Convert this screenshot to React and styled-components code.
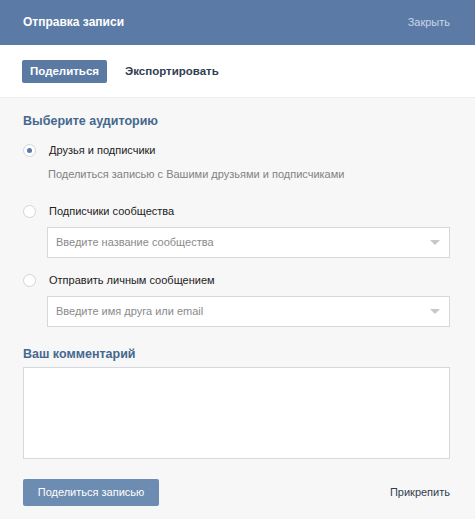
import React from "react";
import styled, { createGlobalStyle } from "styled-components";

const Global = createGlobalStyle`
  html, body { margin: 0; padding: 0; background: #f7f7f7; }
  body { font-family: "Liberation Sans", Arial, sans-serif; font-size: 11px; line-height: 13px; color: #000; }
  * { box-sizing: border-box; }
`;

const Box = styled.div`
  width: 475px;
  height: 519px;
  display: flex;
  flex-direction: column;
  background: #f7f7f7;
  overflow: hidden;
`;

const Header = styled.div`
  height: 45px;
  background: #5b7ba6;
  display: flex;
  align-items: center;
  justify-content: space-between;
  padding: 0 25px 0 23px;
`;

const Title = styled.div`
  color: #fff;
  font-weight: bold;
  font-size: 12px;
`;

const Close = styled.div`
  color: #c9d6e6;
  font-size: 11px;
`;

const Tabs = styled.div`
  height: 53px;
  background: #fff;
  border-bottom: 1px solid #ececec;
  display: flex;
  align-items: center;
  gap: 10px;
  padding: 0 0 0 22px;
`;

const Tab = styled.div`
  height: 23px;
  padding: 0 8px;
  display: flex;
  align-items: center;
  border-radius: 2px;
  font-weight: bold;
  font-size: 11.5px;
  color: ${(p) => (p.$active ? "#fff" : "#2f4052")};
  background: ${(p) => (p.$active ? "#5b7aa3" : "transparent")};
`;

const Body = styled.div`
  flex: 1;
  display: flex;
  flex-direction: column;
  padding: 15px 25px 0 23px;
`;

const Heading = styled.div`
  font-weight: bold;
  font-size: 12.5px;
  line-height: 16px;
  color: #45688e;
  margin-top: ${(p) => p.$mt || 0}px;
`;

const Option = styled.div`
  display: flex;
  align-items: center;
  gap: 13px;
  height: 16px;
  color: #222;
  margin-top: ${(p) => p.$mt}px;
`;

const Radio = styled.span`
  width: 13px;
  height: 13px;
  border-radius: 50%;
  border: 1px solid #d0d5dc;
  background: #fff;
  display: flex;
  align-items: center;
  justify-content: center;
  &::after {
    content: "";
    width: 5px;
    height: 5px;
    border-radius: 50%;
    background: ${(p) => (p.$on ? "#5b7aa3" : "transparent")};
  }
`;

const Hint = styled.div`
  color: #828282;
  margin: 10px 0 0 25px;
`;

const Select = styled.div`
  margin: 8px 0 0 24px;
  height: 31px;
  background: #fff;
  border: 1px solid #d3d9de;
  display: flex;
  align-items: center;
  justify-content: space-between;
  padding: 0 9px 0 8px;
  color: #8a8a8a;
`;

const Arrow = styled.span`
  width: 0;
  height: 0;
  border-left: 5px solid transparent;
  border-right: 5px solid transparent;
  border-top: 5px solid #c4c9cf;
`;

const Comment = styled.div`
  margin-top: 5px;
  height: 92px;
  background: #fff;
  border: 1px solid #d3d9de;
`;

const Footer = styled.div`
  margin-top: 20px;
  display: flex;
  align-items: center;
  justify-content: space-between;
`;

const Button = styled.div`
  width: 136px;
  height: 27px;
  border-radius: 2px;
  background: #6d8cb1;
  color: #fff;
  display: flex;
  align-items: center;
  justify-content: center;
`;

const Link = styled.div`
  color: #2f4052;
`;

export default function App() {
  return (
    <Box>
      <Global />
      <Header>
        <Title>Отправка записи</Title>
        <Close>Закрыть</Close>
      </Header>
      <Tabs>
        <Tab $active>Поделиться</Tab>
        <Tab>Экспортировать</Tab>
      </Tabs>
      <Body>
        <Heading>Выберите аудиторию</Heading>
        <Option $mt={13}>
          <Radio $on />
          Друзья и подписчики
        </Option>
        <Hint>Поделиться записью с Вашими друзьями и подписчиками</Hint>
        <Option $mt={22}>
          <Radio />
          Подписчики сообщества
        </Option>
        <Select>
          Введите название сообщества
          <Arrow />
        </Select>
        <Option $mt={14}>
          <Radio />
          Отправить личным сообщением
        </Option>
        <Select>
          Введите имя друга или email
          <Arrow />
        </Select>
        <Heading $mt={19}>Ваш комментарий</Heading>
        <Comment />
        <Footer>
          <Button>Поделиться записью</Button>
          <Link>Прикрепить</Link>
        </Footer>
      </Body>
    </Box>
  );
}
